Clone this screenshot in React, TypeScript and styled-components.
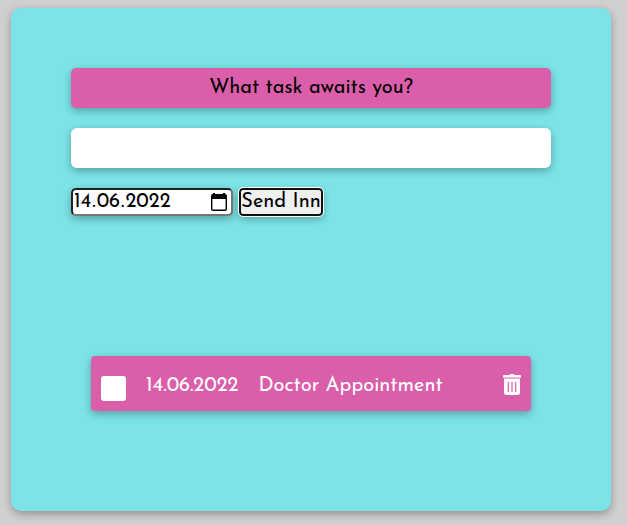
import React, { useState } from "react";
import styled, { createGlobalStyle } from "styled-components";

const GlobalStyle = createGlobalStyle`
  *, *::before, *::after { box-sizing: border-box; }
  body {
    margin: 0;
    background: #d0d0d0;
    font-family: "Josefin Sans", Lato, sans-serif;
    font-size: 20px;
    font-weight: 400;
    color: #000;
  }
`;

const shadow = "0 3px 8px rgba(0, 0, 0, 0.3)";

const Card = styled.main`
  margin: 8px 16px 14px 11px;
  padding: 60px 60px 100px;
  background: #7ce4e8;
  border-radius: 10px;
  box-shadow: ${shadow};
`;

const TaskForm = styled.form`
  display: flex;
  flex-direction: column;
  gap: 20px;
`;

const Title = styled.label`
  height: 40px;
  line-height: 40px;
  text-align: center;
  background: #db5eaa;
  border-radius: 5px;
  box-shadow: ${shadow};
`;

const TaskInput = styled.input`
  width: 100%;
  height: 40px;
  padding: 0 10px;
  border: 0;
  border-radius: 6px;
  background: #fff;
  font: inherit;
  box-shadow: ${shadow};
`;

const Controls = styled.div`
  display: flex;
  gap: 6px;
`;

const DateField = styled.div`
  display: flex;
  align-items: center;
  width: 162px;
  height: 28px;
  padding-right: 4px;
  background: #fff;
  border: 2px inset #767676;
  border-radius: 5px;
  box-shadow: ${shadow};
`;

const DatePart = styled.input`
  field-sizing: content;
  height: 24px;
  padding: 0 1px;
  border: 0;
  outline: 0;
  background: transparent;
  color: #000;
  font: inherit;
  line-height: 24px;
`;

const IconButton = styled.button`
  display: flex;
  margin-left: auto;
  padding: 0;
  border: 0;
  background: none;
  color: inherit;
  cursor: pointer;
`;

const SendButton = styled.button`
  width: 84px;
  height: 28px;
  padding: 0;
  border: 2px solid #101010;
  border-radius: 4px;
  outline: 1px solid #fff;
  background: #efefef;
  color: #000;
  font: inherit;
  line-height: 24px;
  white-space: nowrap;
  box-shadow: ${shadow};
`;

const TaskList = styled.ul`
  list-style: none;
  margin: 140px 20px 0;
  padding: 0;
`;

const TaskItem = styled.li`
  display: flex;
  align-items: flex-start;
  gap: 20px;
  height: 55px;
  padding: 18px 10px 10px;
  background: #db5eaa;
  color: #fff;
  border-radius: 4px;
  line-height: 24px;
  box-shadow: ${shadow};
`;

const Check = styled.input`
  appearance: none;
  flex: none;
  width: 25px;
  height: 25px;
  margin: 2px 0 0;
  background: #fff;
  border-radius: 3px;

  &:checked {
    background: #7ce4e8;
  }
`;

const TaskName = styled.label`
  flex: 1;
`;

function CalendarIcon() {
  return (
    <svg width="16" height="18" viewBox="0 0 16 18" aria-hidden="true">
      <path
        fill="currentColor"
        fillRule="evenodd"
        d="M2 0h2v1h8V0h2v1a2 2 0 0 1 2 2v13a2 2 0 0 1-2 2H2a2 2 0 0 1-2-2V3a2 2 0 0 1 2-2V0ZM1.400 6v10c0 .4.200.600.600.600h12c.4 0 .6-.2.600-.6V6H1.400Z"
      />
    </svg>
  );
}

function TrashIcon() {
  return (
    <svg width="18" height="22" viewBox="0 0 18 22" aria-hidden="true">
      <path
        fill="currentColor"
        d="M6.500 1 7 .4Q7.300 0 8 0h2q.7 0 1 .4l.5.600H17q1 0 1 1v1q0 .5-.5.5H.5Q0 3.500 0 3V2q0-1 1-1h5.500Z"
      />
      <path
        fill="currentColor"
        fillRule="evenodd"
        d="M1 4.500h16V18.500q0 2.500-2.500 2.500h-11Q1 21 1 18.500V4.500ZM4.700 8v10h1.200V8H4.700ZM8.400 8v10h1.200V8H8.400ZM12.100 8v10h1.200V8h-1.200Z"
      />
    </svg>
  );
}

export default function App() {
  const [task, setTask] = useState("");
  const [day, setDay] = useState("14");
  const [month, setMonth] = useState("06");
  const [year, setYear] = useState("2022");
  const [items, setItems] = useState([
    { id: 1, date: "14.06.2022", name: "Doctor Appointment" },
  ]);

  const addTask = (event: React.FormEvent) => {
    event.preventDefault();
    if (!task.trim()) return;
    setItems([...items, { id: Date.now(), date: `${day}.${month}.${year}`, name: task }]);
    setTask("");
  };

  return (
    <>
      <GlobalStyle />
      <Card>
        <TaskForm onSubmit={addTask}>
          <Title htmlFor="task">What task awaits you?</Title>
          <TaskInput
            id="task"
            value={task}
            onChange={(event) => setTask(event.target.value)}
          />
          <Controls>
            <DateField role="group" aria-label="Date">
              <DatePart
                aria-label="Day"
                maxLength={2}
                value={day}
                onChange={(event) => setDay(event.target.value)}
              />
              <span>.</span>
              <DatePart
                aria-label="Month"
                maxLength={2}
                value={month}
                onChange={(event) => setMonth(event.target.value)}
              />
              <span>.</span>
              <DatePart
                aria-label="Year"
                maxLength={4}
                value={year}
                onChange={(event) => setYear(event.target.value)}
              />
              <IconButton type="button" aria-label="Open calendar">
                <CalendarIcon />
              </IconButton>
            </DateField>
            <SendButton type="submit">Send Inn</SendButton>
          </Controls>
        </TaskForm>
        <TaskList>
          {items.map((item) => (
            <TaskItem key={item.id}>
              <Check type="checkbox" id={`task-${item.id}`} />
              <time>{item.date}</time>
              <TaskName htmlFor={`task-${item.id}`}>{item.name}</TaskName>
              <IconButton
                type="button"
                aria-label={`Delete ${item.name}`}
                onClick={() => setItems(items.filter((other) => other.id !== item.id))}
              >
                <TrashIcon />
              </IconButton>
            </TaskItem>
          ))}
        </TaskList>
      </Card>
    </>
  );
}
